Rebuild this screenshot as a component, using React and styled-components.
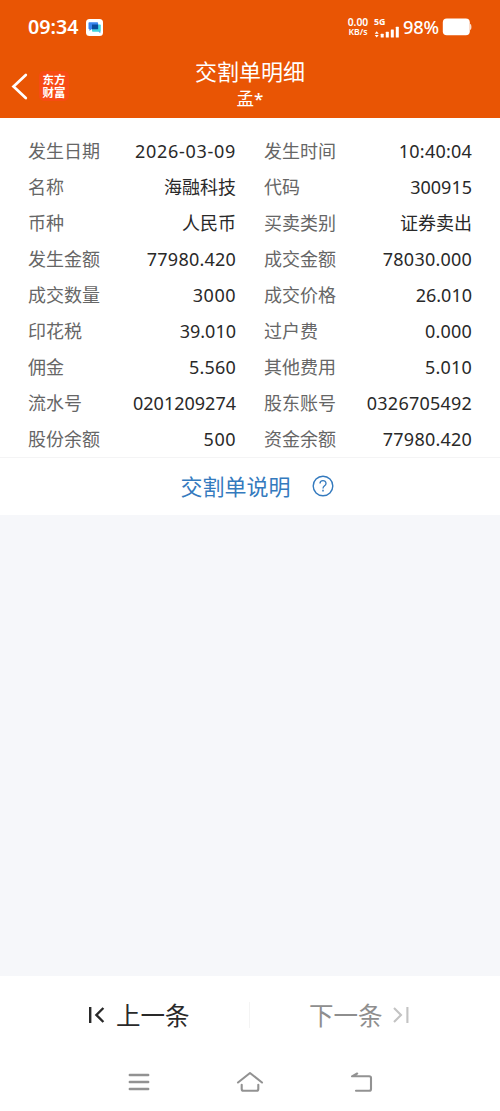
import React from "react";
import styled, { createGlobalStyle } from "styled-components";

const details = [
  ["发生日期", "2026-03-09", "发生时间", "10:40:04"],
  ["名称", "海融科技", "代码", "300915"],
  ["币种", "人民币", "买卖类别", "证券卖出"],
  ["发生金额", "77980.420", "成交金额", "78030.000"],
  ["成交数量", "3000", "成交价格", "26.010"],
  ["印花税", "39.010", "过户费", "0.000"],
  ["佣金", "5.560", "其他费用", "5.010"],
  ["流水号", "0201209274", "股东账号", "0326705492"],
  ["股份余额", "500", "资金余额", "77980.420"],
];

// 숫자 폭 보정
const getSpacing = (value) => {
  if (/[^\d.:-]/.test(value)) return 0;
  if (value.includes("-")) return 0.7;
  if (value === "300915" || value === "0201209274") return 0;
  if (value === "26.010" || value === "39.010") return 0;
  if (value === "3000" || value === "500") return 0.5;
  return 0.22;
};

const StatusBar = () => (
  <StatusContainer>
    <Time>09:34</Time>
    <AppIcon width="17" height="17" viewBox="0 0 17 17">
      <rect width="17" height="17" rx="3.5" fill="#fff" />
      <rect x="6" y="5.5" width="8.8" height="7.2" rx="0.8" fill="#43d6de" />
      <rect x="2.5" y="3.2" width="9.6" height="7" rx="0.8" fill="#3985ef" />
      <rect x="6" y="5.5" width="6.1" height="4.7" fill="#0a4c9c" />
      <path d="M3.5 10v2l2-2zM12.5 12.5h1.8v1.8z" fill="#3985ef" />
    </AppIcon>
    <Speed>
      <SpeedNum>0.00</SpeedNum>
      <SpeedUnit>KB/s</SpeedUnit>
    </Speed>
    <Signal>
      <Network>5G</Network>
      <svg width="26" height="12" viewBox="0 0 26 12" fill="#fff">
        <path d="M0.7 7.8 2.7 5.2 4.7 7.8zM0.7 9 2.7 11.5 4.7 9z" />
        <rect x="6.7" y="7.7" width="3" height="3.8" rx="0.5" />
        <rect x="11.8" y="5.7" width="3" height="5.8" rx="0.5" />
        <rect x="16.8" y="3.5" width="3" height="8" rx="0.5" />
        <rect x="21.8" y="0.8" width="3" height="10.7" rx="0.5" />
      </svg>
    </Signal>
    <Percent>98%</Percent>
    <svg width="30" height="18" viewBox="0 0 30 18" fill="#fff">
      <rect x="0.8" y="0.5" width="27" height="16.8" rx="4" />
      <path d="M28.2 5.8q1.2.5 1.2 3.2t-1.2 3.2z" />
    </svg>
  </StatusContainer>
);

const App = () => {
  return (
    <>
      <GlobalStyle />
      <Page>
        <Header>
          <StatusBar />
          <TitleBar>
            <BackArea>
              <svg width="18" height="28" viewBox="0 0 18 28" fill="none">
                <path d="M15.8 3 3.5 14.5 15.8 26" stroke="#fff" strokeWidth="2.7" strokeLinecap="round" />
              </svg>
              <Logo>
                <span>东方</span>
                <span>财富</span>
              </Logo>
            </BackArea>
            <TitleArea>
              <Title>交割单明细</Title>
              <UserName>
                孟<Star>*</Star>
              </UserName>
            </TitleArea>
          </TitleBar>
        </Header>
        <DetailList>
          {details.map((row) => (
            <DetailRow key={row[0]}>
              <Label>{row[0]}</Label>
              <Value $spacing={getSpacing(row[1])}>{row[1]}</Value>
              <SecondLabel>{row[2]}</SecondLabel>
              <Value $spacing={getSpacing(row[3])}>{row[3]}</Value>
            </DetailRow>
          ))}
        </DetailList>
        <HelpRow>
          <HelpText>交割单说明</HelpText>
          <svg width="22" height="22" viewBox="0 0 22 22" fill="none" stroke="#347abe">
            <circle cx="11" cy="11" r="9.8" strokeWidth="1.4" />
            <path d="M8 8.6C8 4.5 14 4.6 14 8.4 14 10.8 11 10.7 11 13.4" strokeWidth="1.3" />
            <path d="M11 14.8v1.6" strokeWidth="1.5" />
          </svg>
        </HelpRow>
        <EmptyArea />
        <PageNav>
          <PrevBtn>
            <svg width="16" height="18" viewBox="0 0 16 18" fill="none" stroke="#292929" strokeWidth="2.4">
              <path d="M1.2 1v16M14.4 2l-7 7 7 7" />
            </svg>
            上一条
          </PrevBtn>
          <NavLine />
          <NextBtn>
            下一条
            <svg width="16" height="18" viewBox="0 0 16 18" fill="none" stroke="#c3c3c3" strokeWidth="2.1">
              <path d="M14.4 1v16M1 2l7 7-7 7" />
            </svg>
          </NextBtn>
        </PageNav>
        <SystemNav>
          <svg width="22" height="20" viewBox="0 0 22 20" stroke="#929292" strokeWidth="2.4" strokeLinecap="round">
            <path d="M1.8 3h18.4M1.8 10h18.4M1.8 17h18.4" />
          </svg>
          <svg width="28" height="22" viewBox="0 0 28 22" fill="none" stroke="#929292" strokeWidth="2.1" strokeLinecap="round" strokeLinejoin="round">
            <path d="M2 11.5 14 2l12 9.5M5.7 13.8V18q0 1.8 1.8 1.8h13q1.8 0 1.8-1.8v-4.2" />
          </svg>
          <svg width="24" height="22" viewBox="0 0 24 22" fill="none" stroke="#929292" strokeWidth="2.1" strokeLinecap="round" strokeLinejoin="round">
            <path d="M7.2 2.5 2 5.3h17.2q1.8 0 1.8 1.8V18q0 1.8-1.8 1.8H6" />
          </svg>
        </SystemNav>
      </Page>
    </>
  );
};

export default App;

const GlobalStyle = createGlobalStyle`
  * {
    box-sizing: border-box;
  }

  body {
    margin: 0;
    font-family: "Noto Sans", "Noto Sans CJK SC", sans-serif;
  }

  svg {
    display: block;
    flex-shrink: 0;
  }
`;

const Page = styled.div`
  width: 500px;
  height: 1111px;
  display: flex;
  flex-direction: column;
  background-color: white;
  overflow: hidden;
`;

const Header = styled.div`
  height: 118px;
  background-color: #e95504;
  color: white;
`;

const StatusContainer = styled.div`
  height: 54px;
  padding: 0 28px;
  display: flex;
  align-items: center;
`;

const Time = styled.div`
  width: 52px;
  padding-bottom: 2px;
  font-size: 19.7px;
  font-weight: 600;
`;

const AppIcon = styled.svg`
  margin-left: 6px;
`;

const Speed = styled.div`
  width: 24px;
  margin-left: auto;
  display: flex;
  flex-direction: column;
  align-items: center;
  font-family: "Noto Sans", sans-serif;
  font-weight: 600;
  line-height: 10px;
`;

const SpeedNum = styled.span`
  font-size: 10.3px;
`;

const SpeedUnit = styled.span`
  font-size: 8.7px;
`;

const Signal = styled.div`
  margin-left: 4px;
`;

const Network = styled.div`
  font-size: 8.8px;
  font-weight: 700;
  line-height: 8px;
  padding-top: 1px;
`;

const Percent = styled.div`
  width: 38px;
  margin: 0 1px 0 3px;
  padding-bottom: 2px;
  font-size: 18.3px;
  font-weight: 500;
  letter-spacing: -0.2px;
`;

const TitleBar = styled.div`
  height: 64px;
  display: grid;
  grid-template-columns: 1fr 200px 1fr;
`;

const BackArea = styled.div`
  height: 64px;
  padding-left: 10px;
  display: flex;
  align-items: center;
`;

const Logo = styled.div`
  width: 30px;
  height: 30px;
  margin-left: 11px;
  display: flex;
  flex-direction: column;
  align-items: center;
  justify-content: center;
  border-radius: 5px;
  background-color: #f74b14;
  font-family: "Noto Sans CJK SC", sans-serif;
  font-size: 11.5px;
  font-weight: 700;
  line-height: 13.5px;
`;

const TitleArea = styled.div`
  padding-top: 2px;
  text-align: center;
`;

const Title = styled.div`
  font-size: 22px;
  line-height: 30px;
`;

const UserName = styled.div`
  font-size: 17.5px;
  line-height: 24px;
`;

const Star = styled.span`
  font-size: 17px;
  font-weight: 500;
`;

const DetailList = styled.div`
  height: 340px;
  padding: 15px 28px 0;
  border-bottom: 1px solid #f4f4f5;
`;

const DetailRow = styled.div`
  height: 36.05px;
  display: grid;
  grid-template-columns: 80px 128px 108px 128px;
  align-items: center;
  line-height: 36px;
`;

const Label = styled.div`
  font-size: 18px;
  color: #666;
  white-space: nowrap;
`;

const SecondLabel = styled(Label)`
  padding-left: 28px;
`;

const Value = styled.div`
  font-size: 18px;
  color: #292929;
  text-align: right;
  white-space: nowrap;
  letter-spacing: ${(props) => props.$spacing}px;
`;

const HelpRow = styled.div`
  height: 57px;
  padding: 0 0 2px 14px;
  display: flex;
  align-items: center;
  justify-content: center;
  gap: 21px;
  color: #347abe;
  font-size: 22px;
`;

const HelpText = styled.span`
  padding-bottom: 2px;
`;

const EmptyArea = styled.div`
  flex: 1;
  background-color: #f6f7fa;
`;

const PageNav = styled.div`
  height: 78px;
  display: flex;
  align-items: center;
`;

const PrevBtn = styled.div`
  flex: 1;
  display: flex;
  align-items: center;
  justify-content: center;
  gap: 11px;
  padding: 0 0 1px 30px;
  color: #292929;
  font-size: 24.5px;
`;

const NextBtn = styled(PrevBtn)`
  padding: 0 32px 1px 0;
  gap: 10px;
  color: #8e8e8e;
`;

const NavLine = styled.div`
  width: 1px;
  height: 26px;
  background-color: #f4f4f4;
`;

const SystemNav = styled.div`
  height: 57px;
  padding: 0 126px 2px 128px;
  display: flex;
  align-items: center;
  justify-content: space-between;
`;
